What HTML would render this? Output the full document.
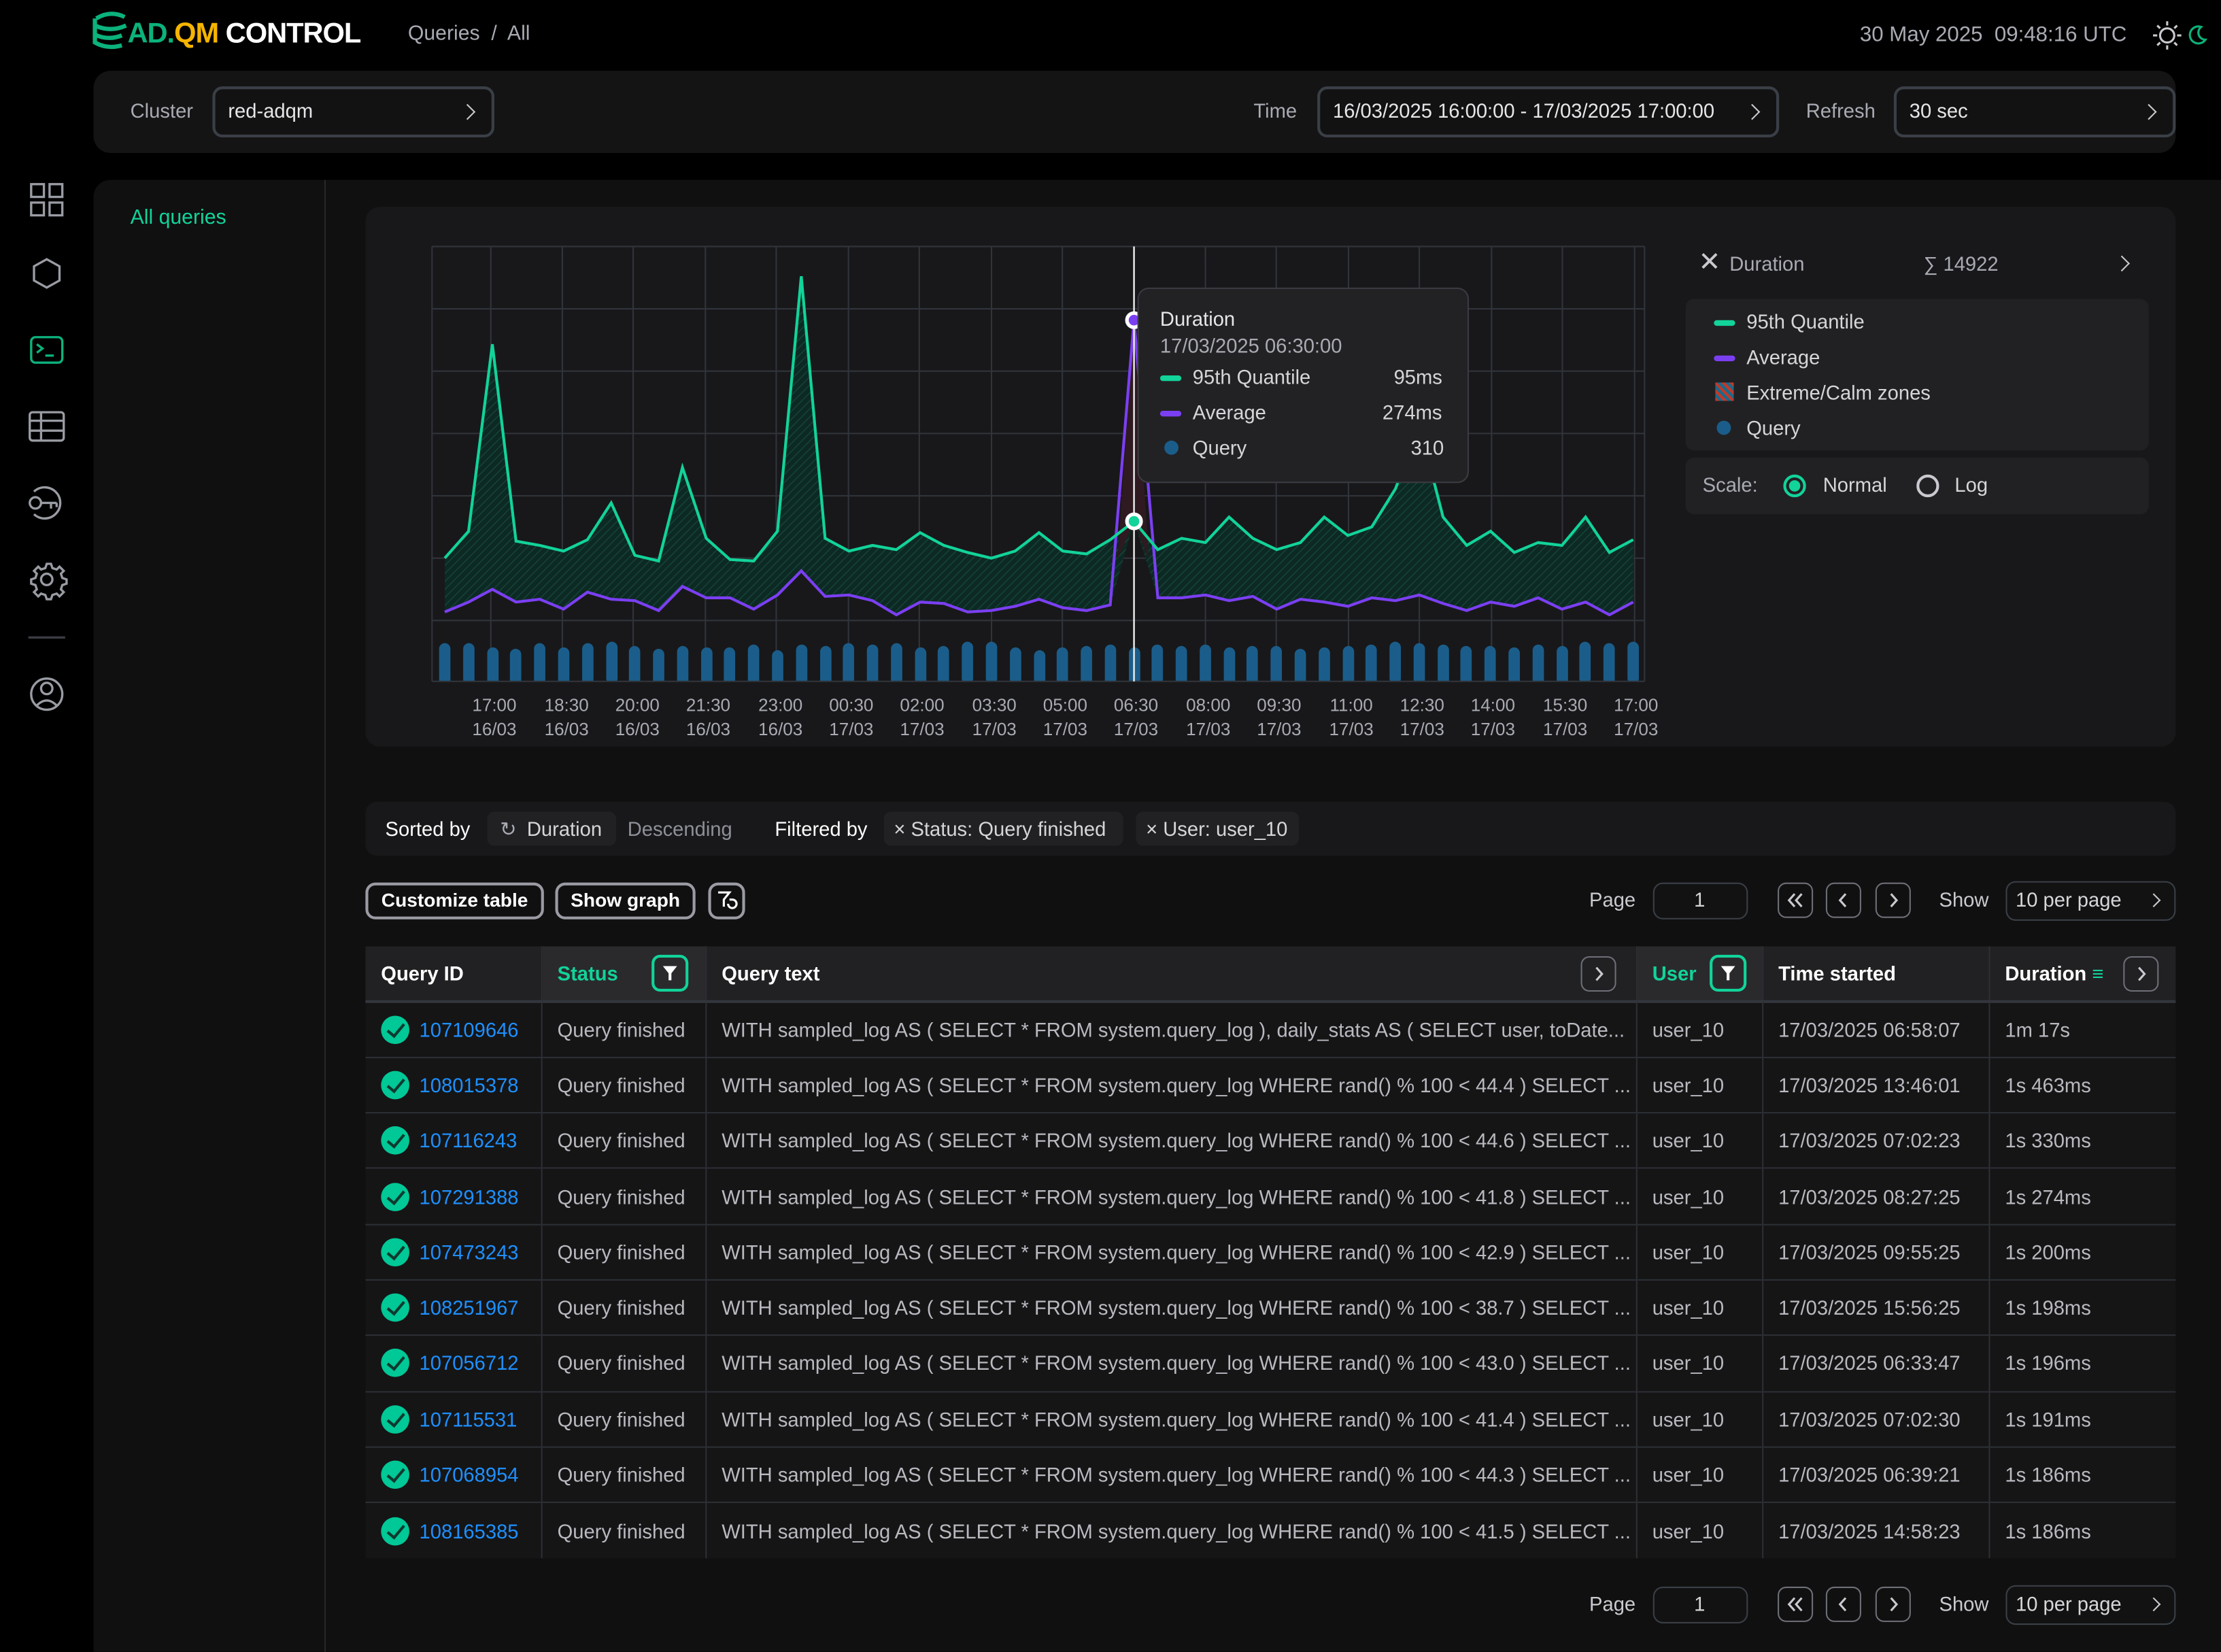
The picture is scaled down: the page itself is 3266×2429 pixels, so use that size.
<!DOCTYPE html>
<html><head><meta charset="utf-8">
<style>
*{box-sizing:border-box;margin:0;padding:0}
html,body{width:3266px;height:2428px;background:#000;overflow:hidden}
#pg{position:absolute;left:0;top:0;width:1568px;height:1166px;transform:scale(2.08291);transform-origin:0 0;background:#000;font-family:"Liberation Sans",Arial,sans-serif;font-size:14px;color:#d6d6da}
.a{position:absolute}
.box{position:absolute;border:2px solid #3a3f47;border-radius:7px;background:#121212}
.lab{color:#a9abb3}
.chev{position:absolute;width:8px;height:8px;border-right:1.8px solid #c9c9cf;border-top:1.8px solid #c9c9cf;transform:rotate(45deg)}
.btn{position:absolute;border:2px solid #9a9ba3;border-radius:7px;color:#fff;font-weight:bold;font-size:13.5px;text-align:center;line-height:21px}
.sq{position:absolute;width:25px;height:25px;border:1.5px solid #6d6f77;border-radius:6px}
.sq svg{position:absolute;left:5px;top:5px}
table{border-collapse:collapse;position:absolute;left:258px;top:668px;width:1278px;table-layout:fixed}
td{height:39.3px;border-bottom:1px solid #2c2f35;border-right:1px solid #2c2f35;padding-left:11px;color:#b9bac0;white-space:nowrap;overflow:hidden;font-size:14px}
td:last-child{border-right:none}
tr.h td{background:#212123;color:#fff;font-weight:bold;height:39px;border-bottom:2px solid #33373d}
tr.r td{background:#151516}
.id{color:#1e90ff}
.ck{display:inline-block;width:20px;height:20px;border-radius:50%;background:#00c896;vertical-align:-5px;margin-right:7px;position:relative}
.ck:after{content:"";position:absolute;left:7px;top:3px;width:5px;height:10px;border-right:2.5px solid #0d3b30;border-bottom:2.5px solid #0d3b30;transform:rotate(40deg)}
.xl{position:absolute;color:#a9abb3;font-size:12.5px;text-align:center;width:50px;line-height:17px}
.flt{position:absolute;top:6px;width:26px;height:26px;border:2px solid #12d39a;border-radius:6px}
.flt svg{position:absolute;left:5px;top:5px}
</style></head><body><div id="pg">

<svg class="a" style="left:64px;top:7px" width="30" height="30" viewBox="0 0 30 30" fill="none" stroke="#0cb27c" stroke-width="3"><path d="M4 6 Q14 0 24 5"/><path d="M3 11 Q14 16 25 11"/><path d="M2 17 Q12 22 22 18"/><path d="M3 23 Q12 28 22 25"/><path d="M3 6 V24"/></svg>
<div class="a" style="left:90px;top:13px;font-size:20px;font-weight:bold;letter-spacing:-0.5px"><span style="color:#0cb27c">AD.</span><span style="color:#f5b400">QM</span><span style="color:#fff"> CONTROL</span></div>
<div class="a lab" style="left:288px;top:16px;font-size:14.5px">Queries &nbsp;/&nbsp; All</div>
<div class="a lab" style="left:1313px;top:16px;font-size:15px">30 May 2025 &nbsp;09:48:16 UTC</div>
<svg class="a" style="left:1519px;top:14px" width="40" height="22" viewBox="0 0 40 22" fill="none" stroke="#c9c9cf" stroke-width="1.5"><circle cx="11" cy="11" r="5"/><path d="M11 1v3M11 18v3M1 11h3M18 11h3M4 4l2 2M16 16l2 2M4 18l2-2M16 6l2-2"/><path d="M35 5a6 6 0 1 0 3 9a5 5 0 0 1-3-9z" stroke="#0cb27c"/></svg>

<div class="a" style="left:66px;top:50px;width:1470px;height:58px;background:#141414;border-radius:12px"></div>
<div class="a lab" style="left:92px;top:70px">Cluster</div>
<div class="box" style="left:150px;top:61px;width:199px;height:36px"></div>
<div class="a" style="left:161px;top:70px;color:#e6e6ea">red-adqm</div><div class="chev" style="left:326px;top:75px"></div>
<div class="a lab" style="left:885px;top:70px">Time</div>
<div class="box" style="left:930px;top:61px;width:326px;height:36px"></div>
<div class="a" style="left:941px;top:70px;color:#e6e6ea">16/03/2025 16:00:00 - 17/03/2025 17:00:00</div><div class="chev" style="left:1233px;top:75px"></div>
<div class="a lab" style="left:1275px;top:70px">Refresh</div>
<div class="box" style="left:1337px;top:61px;width:199px;height:36px"></div>
<div class="a" style="left:1348px;top:70px;color:#e6e6ea">30 sec</div><div class="chev" style="left:1513px;top:75px"></div>

<svg class="a" style="left:14px;top:125px" width="38" height="390" viewBox="0 0 38 390" fill="none" stroke="#9a9ca4" stroke-width="1.6">
<rect x="8" y="5" width="9" height="9"/><rect x="21" y="5" width="9" height="9"/><rect x="8" y="18" width="9" height="9"/><rect x="21" y="18" width="9" height="9"/>
<path d="M19 58l9 5v10l-9 5-9-5V63z"/>
<rect x="8" y="113" width="22" height="18" rx="3" stroke="#0cb27c"/><path d="M12 118l4 3-4 3M18 126h6" stroke="#0cb27c"/>
<rect x="7" y="166" width="24" height="20" rx="2"/><path d="M7 172h24M7 179h24M15 166v20"/>
<circle cx="11" cy="230" r="4"/><path d="M15 230h11M22 230v4M26 230v3"/><path d="M10 222a11 11 0 1 1 0 16"/>
<circle cx="19" cy="284" r="4"/><path d="M19 273l3 0 1 3 3 1 2-2 3 3-2 2 1 3 3 1v3l-3 1-1 3 2 2-3 3-2-2-3 1-1 3h-3l-1-3-3-1-2 2-3-3 2-2-1-3-3-1v-3l3-1 1-3-2-2 3-3 2 2 3-1 1-3z"/>
<path d="M6 325h26" stroke="#3a3c42"/>
<circle cx="19" cy="365" r="11"/><circle cx="19" cy="361" r="4"/><path d="M12 373q7-7 14 0"/>
</svg>

<div class="a" style="left:66px;top:127px;width:1502px;height:1039px;background:#101010;border-radius:12px 0 0 0"></div>
<div class="a" style="left:229px;top:127px;width:1px;height:1039px;background:#26282c"></div>
<div class="a" style="left:92px;top:146px;color:#12d39a;font-size:14.5px">All queries</div>

<div class="a" style="left:258px;top:146px;width:1278px;height:381px;background:#18181a;border-radius:10px"></div>
<svg class="a" style="left:300px;top:170px" width="870" height="320" viewBox="300 170 870 320">
<defs><pattern id="ht" width="4" height="4" patternUnits="userSpaceOnUse" patternTransform="rotate(45)"><rect width="4" height="4" fill="#0d2923"/><line x1="0" y1="0" x2="0" y2="4" stroke="#15443a" stroke-width="1.4"/></pattern></defs>
<g stroke="#30343b" stroke-width="1">
<path d="M305 174H1161M305 218H1161M305 262H1161M305 306H1161M305 350H1161M305 394H1161M305 438H1161M305 481H1161"/>
<path d="M305 174V481M346.5 174V481M397 174V481M447 174V481M498 174V481M548 174V481M599 174V481M649 174V481M700 174V481M750 174V481M851 174V481M901 174V481M952 174V481M1002 174V481M1053 174V481M1103 174V481M1154 174V481M1161 174V481"/>
</g>
<polygon fill="url(#ht)" points="314,394 330.8,375 347.6,243 364.3,382 381.1,385 397.9,389 414.7,381 431.5,355 448.2,392 465,396 481.8,330 498.6,380 515.4,395 532.1,396 548.9,375 565.7,195 582.5,380 599.3,389 616,385 632.8,388 649.6,376 666.4,385 683.2,390 699.9,394 716.7,389 733.5,376 750.3,389 767.1,391 783.8,381 800.6,368 817.4,388 834.2,380 851,383 867.7,365 884.5,380 901.3,388 918.1,383 934.9,365 951.6,378 968.4,372 985.2,345 1002,300 1018.8,365 1035.5,385 1052.3,375 1069.1,390 1085.9,383 1102.7,385 1119.4,365 1136.2,390 1153,381 1153,425 1136.2,434 1119.4,425 1102.7,430 1085.9,422 1069.1,428 1052.3,425 1035.5,431 1018.8,426 1002,420 985.2,424 968.4,422 951.6,428 934.9,425 918.1,423 901.3,430 884.5,421 867.7,424 851,420 834.2,422 817.4,422 800.6,368 783.8,427 767.1,431 750.3,429 733.5,423 716.7,428 699.9,431 683.2,432 666.4,426 649.6,425 632.8,434 616,424 599.3,420 582.5,421 565.7,403 548.9,420 532.1,430 515.4,422 498.6,422 481.8,414 465,431 448.2,424 431.5,423 414.7,418 397.9,430 381.1,423 364.3,425 347.6,416 330.8,425 314,432"/>
<polygon fill="#2e1a20" points="789,395 800.6,226 811,395 800.6,368"/>
<g fill="#1b5d8a">
<rect x="310" y="454" width="8" height="30" rx="4"/><rect x="327" y="454" width="8" height="30" rx="4"/><rect x="344" y="457" width="8" height="30" rx="4"/><rect x="360" y="458" width="8" height="30" rx="4"/><rect x="377" y="454" width="8" height="30" rx="4"/><rect x="394" y="457" width="8" height="30" rx="4"/><rect x="411" y="454" width="8" height="30" rx="4"/><rect x="428" y="453" width="8" height="30" rx="4"/><rect x="444" y="456" width="8" height="30" rx="4"/><rect x="461" y="458" width="8" height="30" rx="4"/><rect x="478" y="456" width="8" height="30" rx="4"/><rect x="495" y="457" width="8" height="30" rx="4"/><rect x="511" y="457" width="8" height="30" rx="4"/><rect x="528" y="455" width="8" height="30" rx="4"/><rect x="545" y="459" width="8" height="30" rx="4"/><rect x="562" y="455" width="8" height="30" rx="4"/><rect x="579" y="456" width="8" height="30" rx="4"/><rect x="595" y="454" width="8" height="30" rx="4"/><rect x="612" y="455" width="8" height="30" rx="4"/><rect x="629" y="454" width="8" height="30" rx="4"/><rect x="646" y="457" width="8" height="30" rx="4"/><rect x="662" y="456" width="8" height="30" rx="4"/><rect x="679" y="453" width="8" height="30" rx="4"/><rect x="696" y="453" width="8" height="30" rx="4"/><rect x="713" y="457" width="8" height="30" rx="4"/><rect x="730" y="459" width="8" height="30" rx="4"/><rect x="746" y="457" width="8" height="30" rx="4"/><rect x="763" y="456" width="8" height="30" rx="4"/><rect x="780" y="455" width="8" height="30" rx="4"/><rect x="797" y="457" width="8" height="30" rx="4"/><rect x="813" y="455" width="8" height="30" rx="4"/><rect x="830" y="456" width="8" height="30" rx="4"/><rect x="847" y="455" width="8" height="30" rx="4"/><rect x="864" y="457" width="8" height="30" rx="4"/><rect x="880" y="456" width="8" height="30" rx="4"/><rect x="897" y="456" width="8" height="30" rx="4"/><rect x="914" y="458" width="8" height="30" rx="4"/><rect x="931" y="457" width="8" height="30" rx="4"/><rect x="948" y="456" width="8" height="30" rx="4"/><rect x="964" y="455" width="8" height="30" rx="4"/><rect x="981" y="453" width="8" height="30" rx="4"/><rect x="998" y="454" width="8" height="30" rx="4"/><rect x="1015" y="455" width="8" height="30" rx="4"/><rect x="1031" y="456" width="8" height="30" rx="4"/><rect x="1048" y="456" width="8" height="30" rx="4"/><rect x="1065" y="457" width="8" height="30" rx="4"/><rect x="1082" y="455" width="8" height="30" rx="4"/><rect x="1099" y="456" width="8" height="30" rx="4"/><rect x="1115" y="453" width="8" height="30" rx="4"/><rect x="1132" y="454" width="8" height="30" rx="4"/><rect x="1149" y="453" width="8" height="30" rx="4"/>
</g>
<rect x="300" y="481" width="870" height="10" fill="#18181a"/>
<path d="M305 481H1161" stroke="#30343b"/>
<polyline fill="none" stroke="#7b3ff2" stroke-width="2" points="314,432 330.8,425 347.6,416 364.3,425 381.1,423 397.9,430 414.7,418 431.5,423 448.2,424 465,431 481.8,414 498.6,422 515.4,422 532.1,430 548.9,420 565.7,403 582.5,421 599.3,420 616,424 632.8,434 649.6,425 666.4,426 683.2,432 699.9,431 716.7,428 733.5,423 750.3,429 767.1,431 783.8,427 800.6,226 817.4,422 834.2,422 851,420 867.7,424 884.5,421 901.3,430 918.1,423 934.9,425 951.6,428 968.4,422 985.2,424 1002,420 1018.8,426 1035.5,431 1052.3,425 1069.1,428 1085.9,422 1102.7,430 1119.4,425 1136.2,434 1153,425"/>
<polyline fill="none" stroke="#12d39a" stroke-width="2" points="314,394 330.8,375 347.6,243 364.3,382 381.1,385 397.9,389 414.7,381 431.5,355 448.2,392 465,396 481.8,330 498.6,380 515.4,395 532.1,396 548.9,375 565.7,195 582.5,380 599.3,389 616,385 632.8,388 649.6,376 666.4,385 683.2,390 699.9,394 716.7,389 733.5,376 750.3,389 767.1,391 783.8,381 800.6,368 817.4,388 834.2,380 851,383 867.7,365 884.5,380 901.3,388 918.1,383 934.9,365 951.6,378 968.4,372 985.2,345 1002,300 1018.8,365 1035.5,385 1052.3,375 1069.1,390 1085.9,383 1102.7,385 1119.4,365 1136.2,390 1153,381"/>
<path d="M800.6 174V481" stroke="#e8e8e8" stroke-width="1.2"/>
<circle cx="800.6" cy="226" r="5" fill="#7b3ff2" stroke="#fff" stroke-width="2.5"/>
<circle cx="800.6" cy="368" r="5" fill="#12d39a" stroke="#fff" stroke-width="2.5"/>
</svg>

<div class="a" style="left:803px;top:203px;width:234px;height:138px;background:#222224;border:1px solid #3a3c42;border-radius:8px"></div>
<div class="a" style="left:819px;top:217px;color:#e6e6ea">Duration</div>
<div class="a lab" style="left:819px;top:236px">17/03/2025 06:30:00</div>
<div class="a" style="left:819px;top:265px;width:15px;height:4px;background:#12d39a;border-radius:2px"></div><div class="a" style="left:842px;top:258px">95th Quantile</div><div class="a" style="left:984px;top:258px">95ms</div>
<div class="a" style="left:819px;top:290px;width:15px;height:4px;background:#7b3ff2;border-radius:2px"></div><div class="a" style="left:842px;top:283px">Average</div><div class="a" style="left:976px;top:283px">274ms</div>
<div class="a" style="left:822px;top:311px;width:10px;height:10px;background:#1b5d8a;border-radius:50%"></div><div class="a" style="left:842px;top:308px">Query</div><div class="a" style="left:996px;top:308px">310</div>

<div class="xl" style="left:324px;top:490px">17:00<br>16/03</div><div class="xl" style="left:375px;top:490px">18:30<br>16/03</div><div class="xl" style="left:425px;top:490px">20:00<br>16/03</div><div class="xl" style="left:475px;top:490px">21:30<br>16/03</div><div class="xl" style="left:526px;top:490px">23:00<br>16/03</div><div class="xl" style="left:576px;top:490px">00:30<br>17/03</div><div class="xl" style="left:626px;top:490px">02:00<br>17/03</div><div class="xl" style="left:677px;top:490px">03:30<br>17/03</div><div class="xl" style="left:727px;top:490px">05:00<br>17/03</div><div class="xl" style="left:777px;top:490px">06:30<br>17/03</div><div class="xl" style="left:828px;top:490px">08:00<br>17/03</div><div class="xl" style="left:878px;top:490px">09:30<br>17/03</div><div class="xl" style="left:929px;top:490px">11:00<br>17/03</div><div class="xl" style="left:979px;top:490px">12:30<br>17/03</div><div class="xl" style="left:1029px;top:490px">14:00<br>17/03</div><div class="xl" style="left:1080px;top:490px">15:30<br>17/03</div><div class="xl" style="left:1130px;top:490px">17:00<br>17/03</div>

<div class="a" style="left:1199px;top:176px;font-size:19px;color:#c9c9cf;line-height:20px">✕</div>
<div class="a lab" style="left:1221px;top:178px">Duration</div>
<div class="a lab" style="left:1358px;top:178px">∑ 14922</div>
<div class="chev" style="left:1494px;top:182px"></div>
<div class="a" style="left:1190px;top:211px;width:327px;height:107px;background:#212123;border-radius:6px"></div>
<div class="a" style="left:1210px;top:226px;width:15px;height:4px;background:#12d39a;border-radius:2px"></div><div class="a" style="left:1233px;top:219px">95th Quantile</div>
<div class="a" style="left:1210px;top:251px;width:15px;height:4px;background:#7b3ff2;border-radius:2px"></div><div class="a" style="left:1233px;top:244px">Average</div>
<div class="a" style="left:1211px;top:270px;width:13px;height:13px;background:repeating-linear-gradient(45deg,#c0392b 0 2px,#1b6a8a 2px 4px)"></div><div class="a" style="left:1233px;top:269px">Extreme/Calm zones</div>
<div class="a" style="left:1212px;top:297px;width:10px;height:10px;background:#1b5d8a;border-radius:50%"></div><div class="a" style="left:1233px;top:294px">Query</div>
<div class="a" style="left:1190px;top:323px;width:327px;height:40px;background:#212123;border-radius:6px"></div>
<div class="a lab" style="left:1202px;top:334px">Scale:</div>
<div class="a" style="left:1259px;top:335px;width:16px;height:16px;border-radius:50%;border:2px solid #12d39a"><div style="margin:2px;width:8px;height:8px;border-radius:50%;background:#12d39a"></div></div>
<div class="a" style="left:1287px;top:334px">Normal</div>
<div class="a" style="left:1353px;top:335px;width:16px;height:16px;border-radius:50%;border:2px solid #c9c9cf"></div>
<div class="a" style="left:1380px;top:334px">Log</div>

<div class="a" style="left:258px;top:566px;width:1278px;height:38px;background:#18181a;border-radius:8px"></div>
<div class="a" style="left:272px;top:577px;color:#fff">Sorted by</div>
<div class="a" style="left:344px;top:573px;width:91px;height:24px;background:#212123;border-radius:5px"></div>
<div class="a lab" style="left:353px;top:577px">↻</div><div class="a" style="left:372px;top:577px">Duration</div>
<div class="a" style="left:443px;top:577px;color:#8e9098">Descending</div>
<div class="a" style="left:547px;top:577px;color:#fff">Filtered by</div>
<div class="a" style="left:624px;top:573px;width:169px;height:24px;background:#212123;border-radius:5px"></div>
<div class="a" style="left:631px;top:577px">× Status: Query finished</div>
<div class="a" style="left:802px;top:573px;width:115px;height:24px;background:#212123;border-radius:5px"></div>
<div class="a" style="left:809px;top:577px">× User: user_10</div>

<div class="btn" style="left:258px;top:623px;width:126px;height:26px">Customize table</div>
<div class="btn" style="left:392px;top:623px;width:99px;height:26px">Show graph</div>
<div class="btn" style="left:500px;top:623px;width:26px;height:26px"><svg width="22" height="22" viewBox="0 0 22 22" fill="none" stroke="#fff" stroke-width="1.5"><path d="M5 5h8l-4 5v5"/><path d="M12 13a3 3 0 1 0 3-3h-2"/></svg></div>

<div class="a" style="left:1122px;top:627px;color:#c9c9cf">Page</div>
<div class="box" style="left:1167px;top:623px;width:67px;height:26px;border-width:1.5px"></div><div class="a" style="left:1196px;top:627px">1</div>
<div class="sq" style="left:1255px;top:623px"><svg width="13" height="13" viewBox="0 0 13 13" fill="none" stroke="#c9c9cf" stroke-width="1.5"><path d="M6 2L2 6.5 6 11M11 2L7 6.5 11 11"/></svg></div>
<div class="sq" style="left:1289px;top:623px"><svg width="13" height="13" viewBox="0 0 13 13" fill="none" stroke="#c9c9cf" stroke-width="1.5"><path d="M8 2L4 6.5 8 11"/></svg></div>
<div class="sq" style="left:1324px;top:623px"><svg width="13" height="13" viewBox="0 0 13 13" fill="none" stroke="#c9c9cf" stroke-width="1.5"><path d="M5 2L9 6.5 5 11"/></svg></div>
<div class="a" style="left:1369px;top:627px;color:#c9c9cf">Show</div>
<div class="box" style="left:1416px;top:622px;width:120px;height:28px;border-width:1.5px"></div><div class="a" style="left:1423px;top:627px">10 per page</div><div class="chev" style="left:1517px;top:632px;width:7px;height:7px"></div>

<table>
<colgroup><col style="width:124px"><col style="width:116px"><col style="width:657px"><col style="width:89px"><col style="width:160px"><col style="width:132px"></colgroup>
<tr class="h"><td>Query ID</td><td style="color:#12d39a;background:#2a2a2c;position:relative">Status<span class="flt" style="left:77px"><svg width="12" height="12" viewBox="0 0 12 12"><path d="M1 1h10L7 6v5H5V6z" fill="#fff"/></svg></span></td><td style="position:relative">Query text<span class="sq" style="left:617px;top:7px"><svg width="13" height="13" viewBox="0 0 13 13" fill="none" stroke="#c9c9cf" stroke-width="1.5"><path d="M5 2L9 6.5 5 11"/></svg></span></td><td style="color:#12d39a;background:#2a2a2c;position:relative">User<span class="flt" style="left:51px"><svg width="12" height="12" viewBox="0 0 12 12"><path d="M1 1h10L7 6v5H5V6z" fill="#fff"/></svg></span></td><td>Time started</td><td style="position:relative">Duration <span style="color:#12d39a">≡</span><span class="sq" style="left:94px;top:7px"><svg width="13" height="13" viewBox="0 0 13 13" fill="none" stroke="#c9c9cf" stroke-width="1.5"><path d="M5 2L9 6.5 5 11"/></svg></span></td></tr>
<tr class="r"><td><span class="ck"></span><span class="id">107109646</span></td><td>Query finished</td><td>WITH sampled_log AS ( SELECT * FROM system.query_log ), daily_stats AS ( SELECT user, toDate...</td><td>user_10</td><td>17/03/2025 06:58:07</td><td>1m 17s</td></tr>
<tr class="r"><td><span class="ck"></span><span class="id">108015378</span></td><td>Query finished</td><td>WITH sampled_log AS ( SELECT * FROM system.query_log WHERE rand() % 100 &lt; 44.4 ) SELECT ...</td><td>user_10</td><td>17/03/2025 13:46:01</td><td>1s 463ms</td></tr>
<tr class="r"><td><span class="ck"></span><span class="id">107116243</span></td><td>Query finished</td><td>WITH sampled_log AS ( SELECT * FROM system.query_log WHERE rand() % 100 &lt; 44.6 ) SELECT ...</td><td>user_10</td><td>17/03/2025 07:02:23</td><td>1s 330ms</td></tr>
<tr class="r"><td><span class="ck"></span><span class="id">107291388</span></td><td>Query finished</td><td>WITH sampled_log AS ( SELECT * FROM system.query_log WHERE rand() % 100 &lt; 41.8 ) SELECT ...</td><td>user_10</td><td>17/03/2025 08:27:25</td><td>1s 274ms</td></tr>
<tr class="r"><td><span class="ck"></span><span class="id">107473243</span></td><td>Query finished</td><td>WITH sampled_log AS ( SELECT * FROM system.query_log WHERE rand() % 100 &lt; 42.9 ) SELECT ...</td><td>user_10</td><td>17/03/2025 09:55:25</td><td>1s 200ms</td></tr>
<tr class="r"><td><span class="ck"></span><span class="id">108251967</span></td><td>Query finished</td><td>WITH sampled_log AS ( SELECT * FROM system.query_log WHERE rand() % 100 &lt; 38.7 ) SELECT ...</td><td>user_10</td><td>17/03/2025 15:56:25</td><td>1s 198ms</td></tr>
<tr class="r"><td><span class="ck"></span><span class="id">107056712</span></td><td>Query finished</td><td>WITH sampled_log AS ( SELECT * FROM system.query_log WHERE rand() % 100 &lt; 43.0 ) SELECT ...</td><td>user_10</td><td>17/03/2025 06:33:47</td><td>1s 196ms</td></tr>
<tr class="r"><td><span class="ck"></span><span class="id">107115531</span></td><td>Query finished</td><td>WITH sampled_log AS ( SELECT * FROM system.query_log WHERE rand() % 100 &lt; 41.4 ) SELECT ...</td><td>user_10</td><td>17/03/2025 07:02:30</td><td>1s 191ms</td></tr>
<tr class="r"><td><span class="ck"></span><span class="id">107068954</span></td><td>Query finished</td><td>WITH sampled_log AS ( SELECT * FROM system.query_log WHERE rand() % 100 &lt; 44.3 ) SELECT ...</td><td>user_10</td><td>17/03/2025 06:39:21</td><td>1s 186ms</td></tr>
<tr class="r"><td style="border-bottom:none"><span class="ck"></span><span class="id">108165385</span></td><td style="border-bottom:none">Query finished</td><td style="border-bottom:none">WITH sampled_log AS ( SELECT * FROM system.query_log WHERE rand() % 100 &lt; 41.5 ) SELECT ...</td><td style="border-bottom:none">user_10</td><td style="border-bottom:none">17/03/2025 14:58:23</td><td style="border-bottom:none">1s 186ms</td></tr>
</table>

<div class="a" style="left:1122px;top:1124px;color:#c9c9cf">Page</div>
<div class="box" style="left:1167px;top:1120px;width:67px;height:26px;border-width:1.5px"></div><div class="a" style="left:1196px;top:1124px">1</div>
<div class="sq" style="left:1255px;top:1120px"><svg width="13" height="13" viewBox="0 0 13 13" fill="none" stroke="#c9c9cf" stroke-width="1.5"><path d="M6 2L2 6.5 6 11M11 2L7 6.5 11 11"/></svg></div>
<div class="sq" style="left:1289px;top:1120px"><svg width="13" height="13" viewBox="0 0 13 13" fill="none" stroke="#c9c9cf" stroke-width="1.5"><path d="M8 2L4 6.5 8 11"/></svg></div>
<div class="sq" style="left:1324px;top:1120px"><svg width="13" height="13" viewBox="0 0 13 13" fill="none" stroke="#c9c9cf" stroke-width="1.5"><path d="M5 2L9 6.5 5 11"/></svg></div>
<div class="a" style="left:1369px;top:1124px;color:#c9c9cf">Show</div>
<div class="box" style="left:1416px;top:1119px;width:120px;height:28px;border-width:1.5px"></div><div class="a" style="left:1423px;top:1124px">10 per page</div><div class="chev" style="left:1517px;top:1129px;width:7px;height:7px"></div>

</div></body></html>
